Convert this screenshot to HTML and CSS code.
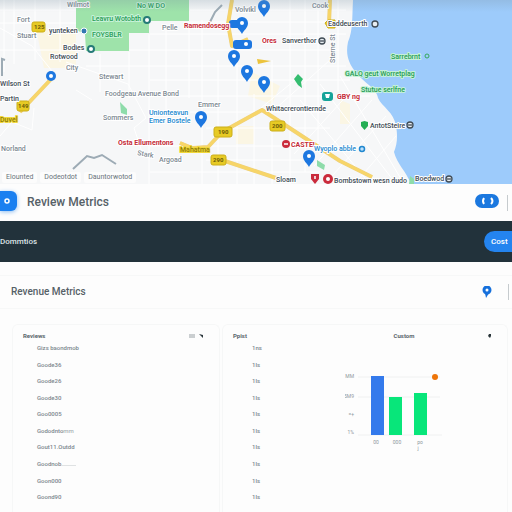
FILE: index.html
```html
<!DOCTYPE html>
<html lang="en">
<head>
<meta charset="utf-8">
<meta name="viewport" content="width=device-width, initial-scale=1">
<title>Review Metrics</title>
<link rel="stylesheet" href="styles.css">
</head>
<body>
<div class="app">
  <section class="map" aria-label="Map">
    <svg class="map-art" viewBox="0 0 512 184" preserveAspectRatio="xMidYMid slice">
      <defs>
        <g id="pin"><path d="M0 9C-2 5-6 3-6-2A6 6 0 0 1 6-2C6 3 2 5 0 9Z"/><circle cy="-2" r="2" fill="#fff"/></g>
        <linearGradient id="shade" x2="0" y2="1"><stop offset="0" stop-color="#7890a0" stop-opacity=".25"/><stop offset="1" stop-color="#7890a0" stop-opacity="0"/></linearGradient>
      </defs>
      <rect width="512" height="184" fill="#f6f7f8"/>
      <path fill="#fbf6e4" d="M36 28h40v40H44zM252 72l28 14-8 18-24-8zM340 100l10 4v20h-10zM236 126h18v18h-18z"/>
      <path class="streets" d="M4 0v72M14 0v64M35 0v60M60 0v62M100 54v38M129 52v46M149 34v150M166 24v88M189 22v76M202 20v164M218 60v124M237 62v122M254 94v90M272 60v124M290 0v184M305 0v172M318 0v150M338 0v92M0 10h76M0 23h76M0 50h74M86 66h260M129 50h210M150 34h196M190 22h156M190 10h156M150 80h200M160 96h210M190 112h140M206 128h124M150 146h146M206 160h96M150 172h170M340 76l64 108M320 84l76 100M300 100l70 84M350 92l-56 62M372 100l-58 66M386 116l-54 60M396 136l-38 44M300 76l-44 36M330 60l-56 50"/>
      <path class="streets" d="M0 28l32 18 24 30M66 62l62 22 18 34-12 10 8 24M0 136l12-14 20 8 2-22M76 90l16 10"/>
      <path fill="#9ee3aa" d="M76 0h113v21h-40v12h-20v18H86l-1-17-9-4z"/>
      <path fill="#9dcbfb" d="M353 0C352 18 353 30 348 42C345 56 350 64 354 70C362 82 377 88 378 98C382 107 394 112 396 126C398 137 397 144 394 152C397 164 406 171 411 184H512V0Z"/>
      <g class="road-edge"><path d="M54 76L20 112M232 0l-4 24 4 22 16-7M330 0l-1 24M180 143l12 5 16-1 14-15 40-22 20 13 58 38 32 16M222 160l54 18"/></g>
      <g class="road"><path d="M54 76L20 112M232 0l-4 24 4 22 16-7M330 0l-1 24M180 143l12 5 16-1 14-15 40-22 20 13 58 38 32 16M222 160l54 18"/></g>
      <path fill="#ecc33c" d="M257 59l14 2-13 3z"/>
      <path class="rail" d="M73 169l14-13 7 2 8-3 14 9M210 22l5-10 7-7M2 76V59l3 1"/>
      <path fill="#8edcaa" d="M120 102l7 7v6l-6-2zM317 160l8 5-1 5-7-4zM410 176l4 3v5h-5z"/>
      <path fill="#35bd70" d="M294 79l4-5 5 5-2 3 1 6-4-3z"/>
      <g fill="#e7ca24" stroke="#cbae18"><rect x="32" y="22" width="13" height="10" rx="2"/><rect x="17" y="101" width="12" height="10" rx="2"/><rect x="214" y="127" width="18" height="10" rx="2"/><rect x="211" y="155" width="15" height="10" rx="2"/><rect x="270" y="121" width="15" height="10" rx="2"/><path d="M325 23l3-3h7v8h-7z"/></g>
      <g class="shield"><text x="34" y="29">125</text><text x="18" y="108">149</text><text x="218" y="134">190</text><text x="213" y="162">290</text><text x="272" y="128">200</text></g>
      <g fill="#1d77e0"><rect x="229" y="20" width="13" height="8" rx="3"/><rect x="233" y="40" width="19" height="9" rx="3"/><circle cx="51" cy="76" r="5"/><use href="#pin" x="264" y="8"/><use href="#pin" x="242" y="25"/><use href="#pin" x="234" y="58"/><use href="#pin" x="247" y="73"/><use href="#pin" x="264" y="84"/><use href="#pin" x="201" y="119"/><use href="#pin" x="309" y="158"/></g>
      <circle cx="51" cy="76" r="2" fill="#fff"/><circle cx="246" cy="44" r="2" fill="#fff"/>
      <g class="label">
        <text x="67" y="7">Wilmot</text><text x="17" y="22">Fort</text><text x="17" y="38">Stuart</text><text x="66" y="70">City</text><text x="99" y="79">Stewart</text><text x="105" y="96">Foodgeau Avenue Bond</text><text x="198" y="107">Emmer</text><text x="103" y="120">Sommers</text><text x="1" y="151">Norland</text><text x="235" y="12">Volvikl</text><text x="162" y="30">Pelle</text><text x="312" y="8">Cook</text>
        <text transform="translate(335 63) rotate(-90)">Sterne St</text><text transform="translate(137 155) rotate(10)">Stark</text><text x="159" y="162">Argoad</text>
      </g>
      <g class="label dark">
        <text x="49" y="33">yunteken</text><text x="63" y="50">Bodies</text><text x="50" y="59">Rotwood</text><text x="0" y="86">Wilson St</text><text x="0" y="101">Partin</text><text x="282" y="43">Sanverthor</text><text x="328" y="26">Eaddeuserth</text><text x="266" y="111">Whitacrerontiernde</text><text x="370" y="128">AntotSteire</text><text x="276" y="182">Sloam</text><text x="334" y="183">Bombstown wesn dudo</text><text x="415" y="181">Boedwod</text>
      </g>
      <g class="label red"><text x="184" y="28">Ramendosegg</text><text x="262" y="43">Ores</text><text x="118" y="145">Osta Ellumentons</text><text x="291" y="147">CASTEL</text><text x="337" y="99">GBY ng</text></g>
      <g class="label blue"><text x="149" y="115">Unionteavun</text><text x="149" y="123">Emer Bostele</text><text x="314" y="151">Wyoplo abble</text></g>
      <g class="label green"><text x="391" y="59">Sarrebrnt</text><text x="345" y="76">GALQ geut Worretplag</text><text x="361" y="92">Stutue serlfne</text><text x="92" y="21">Leavru Wotobth</text><text x="92" y="37">FOYSBLR</text><text x="137" y="8">No W DO</text></g>
      <g class="label gold"><text x="0" y="122">Duvel</text><text x="180" y="152">Mahatma</text></g>
      <circle cx="84" cy="31" r="3" fill="#3379b1" stroke="#fff"/><g fill="#fff" stroke="#267b78" stroke-width="2"><circle cx="91" cy="49" r="3"/><circle cx="147" cy="20" r="3"/></g>
      <g fill="#e8eef2" stroke="#414c55" stroke-width="1.300"><circle cx="322" cy="41" r="3"/><path d="M320 41h4"/><circle cx="375" cy="24" r="3"/><circle cx="410" cy="125" r="3"/><path d="M408 125h4"/><circle cx="449" cy="179" r="3"/><path d="M447 179h4"/></g>
      <circle cx="362" cy="149" r="2.500" fill="#bfe1fc" stroke="#2188cf" stroke-width="1.500"/>
      <circle cx="427" cy="56" r="2" fill="none" stroke="#36a85d"/>
      <rect x="322" y="92" width="11" height="9" rx="3" fill="#16a399"/><path d="M325 94h5l-1 4h-3z" fill="#fff"/>
      <path fill="#24ae54" d="M361 122l3.500-1 3.500 1v4l-3.500 4-3.500-4z"/>
      <g fill="#ca2b3c"><circle cx="286" cy="144" r="4"/><path d="M311 174h8v5l-4 5-4-5z"/><circle cx="328" cy="179" r="5"/></g><path d="M284 144h4M315 176v3" stroke="#fff" stroke-width="1.500"/><circle cx="328" cy="179" r="2" fill="#fff"/>
      <rect width="512" height="12" fill="url(#shade)"/>
    </svg>
    <nav class="chips" aria-label="Places"><a href="#list">Elounted</a><a href="#list">Dodeotdot</a><a href="#list">Dauntorwotod</a></nav>
  </section>

  <header class="topbar">
    <button class="tile" type="button" aria-label="Profile"><svg width="17" height="20" viewBox="0 0 17 20"><circle cx="7" cy="10" r="2" fill="none" stroke="#fff" stroke-width="1.500"/></svg></button>
    <h1>Review Metrics</h1>
    <button class="toggle" type="button" aria-label="Switch view"><svg width="24" height="14" viewBox="0 0 24 14" fill="none" stroke="#fff" stroke-width="2"><path d="M9 4Q7 7 9 10M16 4q3 3 0 6"/></svg></button>
    <span class="divider"></span>
  </header>

  <div class="banner"><span>Dommtios</span><button type="button">Cost</button></div>

  <div class="subhead">
    <h2>Revenue Metrics</h2>
    <svg width="10" height="12" viewBox="0 0 10 12" aria-hidden="true"><circle cx="5" cy="4" r="3" fill="none" stroke="#1670dc" stroke-width="3"/><path d="M3 7h4L4 12z" fill="#1670dc"/></svg>
    <span class="divider"></span>
  </div>

  <main class="cards">
    <section class="card" id="list">
      <div class="card-head"><h3>Reviews</h3><button type="button" aria-label="Sort list"><svg width="16" height="8" viewBox="0 0 16 8"><path d="M1 2v4M3 2v4M5 2v4" stroke="#98a0a4"/><path d="M10 2l4 1v3z" fill="#293439"/></svg></button></div>
      <table class="names" aria-label="Reviews">
        <tr><td>Gizs baondmob</td></tr><tr><td>Goode36</td></tr><tr><td>Goode26</td></tr><tr><td>Goode30</td></tr><tr><td>Goo0005</td></tr><tr><td>Gododnto<span class="faint">mm</span></td></tr><tr><td>Gout11.Outdd</td></tr><tr><td>Goodnob<span class="line"></span></td></tr><tr><td>Goon000</td></tr><tr><td>Goond90</td></tr><tr><td>Goond00</td></tr>
      </table>
    </section>
    <section class="card">
      <div class="card-head"><h3>Ppist</h3><h3 class="centered">Custom</h3><button type="button" aria-label="Chart options"><svg width="6" height="8" viewBox="0 0 6 8"><path d="M2 2h2v2L3 6 1 4z" fill="#293439"/></svg></button></div>
      <div class="split">
        <table class="values" aria-label="Values">
          <tr><td>1ns</td></tr><tr><td>1ls</td></tr><tr><td>1ls</td></tr><tr><td>1ls</td></tr><tr><td>1ls</td></tr><tr><td>1ls</td></tr><tr><td>1ls</td></tr><tr><td>1ls</td></tr><tr><td>1ls</td></tr><tr><td>1ls</td></tr><tr><td>1ls</td></tr>
        </table>
        <svg class="chart" width="100" height="84" viewBox="0 0 100 84" role="img" aria-label="Bar chart">
          <path d="M13 7h82M13 27h82M13 65h84" stroke="#f0f1f1"/>
          <rect x="26" y="6" width="13" height="59" fill="#347aec"/><rect x="44" y="27" width="13" height="38" fill="#08e67a"/><rect x="69" y="23" width="13" height="42" fill="#08e67a"/>
          <circle cx="90" cy="7" r="3" fill="#ee7508"/>
          <g class="ticks"><text x="9" y="8">MM</text><text x="9" y="28">5M9</text><text x="9" y="46">=+</text><text x="9" y="64">1%</text></g>
          <g class="cats"><text x="31" y="74">00</text><text x="52" y="74">000</text><text x="75" y="74">po</text><text x="73" y="80">j</text></g>
        </svg>
      </div>
    </section>
  </main>
</div>
</body>
</html>
```
FILE: styles.css
```css
* { box-sizing: border-box; }
body { margin: 0; background: #fdfdfd; color: #566167; font-family: Roboto, "Liberation Sans", sans-serif; }
button { border: 0; padding: 0; font: inherit; cursor: pointer; }
h1, h2, h3 { margin: 0; }
svg { display: block; flex: none; }
.app { height: 100vh; overflow: hidden; display: flex; flex-direction: column; }
.map { position: relative; flex: none; }
.map-art { width: 100%; height: 184px; }
.streets { fill: none; stroke: #fff; stroke-width: 1; }
.road, .road-edge { fill: none; stroke: #f7d568; stroke-width: 3; stroke-linejoin: round; }
.road-edge { stroke: #ecd07f; stroke-width: 4; }
.rail { fill: none; stroke: #9dabb5; stroke-width: 2; }
.label { font-size: 7px; font-weight: 500; fill: #7c8891; stroke: #fff; stroke-width: 2px; stroke-linejoin: round; paint-order: stroke; }
.label.dark { fill: #414c55; }
.label.red { fill: #c52b37; font-weight: 700; }
.label.blue { fill: #2188cf; }
.label.green { fill: #279b55; stroke: #c6f2d8; }
.label.gold { fill: #8f7c05; stroke: #f0d83a; }
.shield { font-size: 6px; font-weight: 700; fill: #6d5c08; }
.chips { position: absolute; left: 2px; bottom: 1px; display: flex; gap: 3px; }
.chips a { padding: 1px 4px; border-radius: 2px; background: #fcfcfc; color: #69747b; font-size: 7px; line-height: 9px; text-decoration: none; }
.topbar { flex: none; height: 37px; display: flex; align-items: center; padding-right: 4px; }
.topbar h1 { flex: 1; margin-left: 10px; padding-bottom: 2px; font-size: 12px; font-weight: 500; }
.tile { width: 17px; height: 20px; margin-bottom: 3px; border-radius: 0 6px 6px 0; background: #1b80f0; box-shadow: 0 1px 4px #8dbdf0; overflow: hidden; }
.toggle { width: 24px; height: 14px; margin-bottom: 3px; border-radius: 7px; background: #1b78df; }
.divider { width: 1px; height: 16px; margin-left: 8px; background: #c6cbce; }
.banner { flex: none; height: 41px; display: flex; align-items: center; justify-content: space-between; background: #22323b; color: #dce2e5; font-size: 8px; font-weight: 500; overflow: hidden; }
.banner button { width: 28px; height: 21px; padding-left: 7px; border-radius: 11px 0 0 11px; background: #2484ef; color: #fff; text-align: left; white-space: nowrap; }
.subhead { flex: none; height: 34px; margin-top: 13px; padding: 0 3px 0 11px; display: flex; align-items: center; border-top: 1px solid #f7f8f8; border-bottom: 1px solid #f7f8f8; }
.subhead h2 { flex: 1; padding-bottom: 1px; font-size: 10px; font-weight: 500; }
.subhead .divider { margin-left: 16px; }
.cards { flex: 1; min-height: 0; margin-top: 15px; padding: 0 4px 0 12px; display: grid; grid-template-columns: 208fr 286fr; gap: 2px; }
.card { min-height: 0; overflow: hidden; padding: 7px 14px 0 10px; border: 1px solid #f6f7f7; border-bottom: 0; border-radius: 6px 6px 0 0; background: #fdfdfd; }
.card-head { display: flex; align-items: center; justify-content: space-between; height: 8px; }
.card-head h3 { color: #59656b; font-size: 6px; font-weight: 700; line-height: 8px; }
.card-head h3.centered { margin-left: 74px; }
.card-head button { background: none; }
table { border-collapse: collapse; height: 182px; font-size: 6px; font-weight: 500; line-height: 8px; color: #7c878d; }
td { padding: 0; vertical-align: middle; white-space: nowrap; }
.names { margin-left: 14px; }
.faint { color: #a9b1b5; }
.line { display: inline-block; width: 15px; border-bottom: 1px solid #dfe2e3; }
.values { margin-left: 19px; }
.split { display: flex; justify-content: space-between; }
.chart { margin: 30px 48px 0 0; }
.ticks, .cats { font-size: 5px; fill: #8e989d; }
.ticks { text-anchor: end; }
.cats { text-anchor: middle; }
```
